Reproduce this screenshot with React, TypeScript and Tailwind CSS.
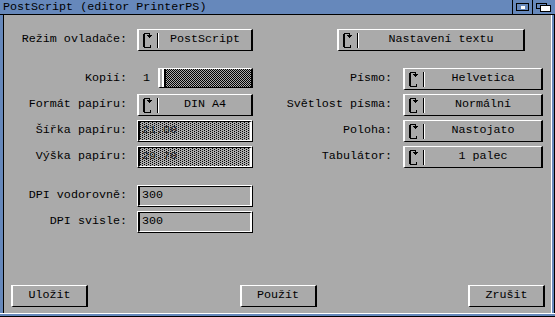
import React from "react";

const FONT = "font-['Liberation_Mono',monospace] text-[11.7px] leading-none text-black";

function CycleIcon() {
  return (
    <svg width="10" height="15" viewBox="0 0 10 15" shapeRendering="crispEdges" className="shrink-0">
      <rect x="0" y="1" width="2" height="13" fill="#000" />
      <rect x="1" y="0" width="5" height="1" fill="#000" />
      <rect x="1" y="14" width="7" height="1" fill="#000" />
      <rect x="7" y="12" width="1" height="2" fill="#000" />
      <rect x="6" y="0" width="1" height="2" fill="#000" />
      <rect x="4" y="2" width="5" height="1" fill="#000" />
      <rect x="5" y="3" width="3" height="1" fill="#000" />
      <rect x="6" y="4" width="1" height="1" fill="#000" />
    </svg>
  );
}

function Cycle({ label, className }: { label: string; className: string }) {
  return (
    <div
      className={`flex h-[22px] items-center border-t border-b border-l-2 border-r-2 border-t-white border-l-white border-r-black border-b-black ${className}`}
    >
      <div className="ml-[4px]">
        <CycleIcon />
      </div>
      <div className="ml-[4px] flex h-[15px]">
        <div className="w-px bg-black" />
        <div className="w-px bg-white" />
      </div>
      <span className="flex-1 text-center">{label}</span>
    </div>
  );
}

function Ridge({ children, ghost }: { children?: React.ReactNode; ghost?: boolean }) {
  return (
    <div className="h-[22px] w-[116px] border-t border-l border-t-white border-l-white border-b border-r border-b-black border-r-black">
      <div
        className={`flex h-full items-center border-t border-l-2 border-t-black border-l-black border-b border-r-2 border-b-white border-r-white pl-[2px] ${
          ghost
            ? "bg-[conic-gradient(from_270deg_at_1px_1px,#000_90deg,transparent_0),conic-gradient(from_270deg_at_1px_1px,#000_90deg,transparent_0)] bg-[length:4px_2px] bg-[position:0_0,2px_1px] text-[#222]"
            : ""
        }`}
      >
        {children}
      </div>
    </div>
  );
}

function Button({ label }: { label: string }) {
  return (
    <div className="flex h-[22px] w-[77px] items-center justify-center border-t border-b border-l-2 border-r-2 border-t-white border-l-white border-r-black border-b-black">
      {label}
    </div>
  );
}

function Label({ children, w }: { children: React.ReactNode; w: string }) {
  return <div className={`flex items-center justify-end ${w}`}>{children}</div>;
}

export default function App() {
  return (
    <div className={`flex h-[317px] w-[555px] flex-col bg-[#6688bb] ${FONT}`}>
      {/* Title bar */}
      <div className="flex h-[14px] items-stretch">
        <div className="flex flex-1 items-center pl-[3px] pt-px">PostScript (editor PrinterPS)</div>
        <div className="w-px bg-black" />
        <div className="flex w-[19px] items-center justify-center">
          <div className="flex h-[8px] w-[13px] items-center justify-center border border-black">
            <div className="h-[3px] w-[4px] bg-white" />
          </div>
        </div>
        <div className="w-px bg-black" />
        <div className="relative w-[22px]">
          <div className="absolute left-[3px] top-[3px] h-[6px] w-[11px] border border-black" />
          <div className="absolute left-[7px] top-[5px] h-[7px] w-[11px] border border-black bg-white" />
        </div>
      </div>
      <div className="h-px bg-black" />

      {/* Body */}
      <div className="flex flex-1">
        <div className="w-[3px]" />
        <div className="w-px bg-black" />
        <div className="flex flex-1 flex-col bg-[#aaaaaa] pt-[14px]">
          {/* Row 1 */}
          <div className="flex">
            <Label w="w-[133px] pr-[10px]">Režim ovladače:</Label>
            <Cycle label="PostScript" className="w-[116px]" />
            <Cycle label="Nastavení textu" className="ml-[84px] w-[188px]" />
          </div>

          {/* Rows 2-5 */}
          <div className="mt-[17px] grid grid-cols-[133px_116px_150px_140px] grid-rows-[22px_22px_22px_22px] gap-y-[4px]">
            <Label w="pr-[10px]">Kopií:</Label>
            <div className="flex items-center">
              <span className="ml-[6px] w-[15px]">1</span>
              <div className="-mt-[2px] flex h-[20px] w-[95px] border-t border-b border-l-2 border-r-2 border-t-white border-l-white border-r-black border-b-black pl-[2px]">
                <div className="w-[2px] bg-white" />
                <div className="w-[2px] bg-black" />
                <div className="flex-1 bg-[repeating-conic-gradient(#000_0%_25%,#aaaaaa_0%_50%)] bg-[length:2px_2px]" />
              </div>
            </div>
            <Label w="pr-[11px]">Písmo:</Label>
            <Cycle label="Helvetica" className="w-[140px]" />

            <Label w="pr-[10px]">Formát papíru:</Label>
            <Cycle label="DIN A4" className="w-[116px]" />
            <Label w="pr-[11px]">Světlost písma:</Label>
            <Cycle label="Normální" className="w-[140px]" />

            <Label w="pr-[10px]">Šířka papíru:</Label>
            <Ridge ghost>21.00</Ridge>
            <Label w="pr-[11px]">Poloha:</Label>
            <Cycle label="Nastojato" className="w-[140px]" />

            <Label w="pr-[10px]">Výška papíru:</Label>
            <Ridge ghost>29.70</Ridge>
            <Label w="pr-[11px]">Tabulátor:</Label>
            <Cycle label="1 palec" className="w-[140px]" />
          </div>

          {/* DPI */}
          <div className="mt-[17px] flex flex-col gap-[4px]">
            <div className="flex">
              <Label w="w-[133px] pr-[10px]">DPI vodorovně:</Label>
              <Ridge>300</Ridge>
            </div>
            <div className="flex">
              <Label w="w-[133px] pr-[10px]">DPI svisle:</Label>
              <Ridge>300</Ridge>
            </div>
          </div>

          <div className="flex-1" />

          {/* Buttons */}
          <div className="mb-[6px] flex justify-between pl-[7px] pr-[6px]">
            <Button label="Uložit" />
            <Button label="Použít" />
            <Button label="Zrušit" />
          </div>
        </div>
        <div className="w-px bg-white" />
        <div className="w-[2px]" />
        <div className="w-px bg-black" />
      </div>
      <div className="h-px bg-white" />
      <div className="h-[2px]" />
      <div className="h-px bg-black" />
    </div>
  );
}
